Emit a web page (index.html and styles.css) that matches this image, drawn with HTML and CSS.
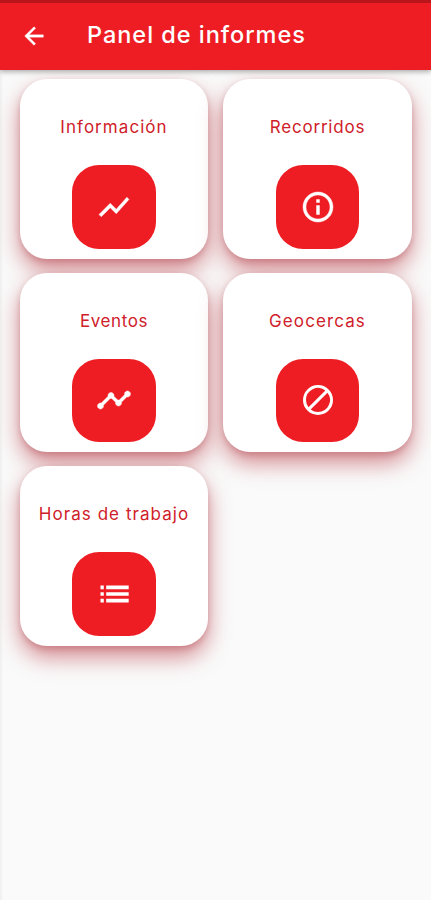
FILE: index.html
```html
<!DOCTYPE html>
<html lang="es">
<head>
    <meta charset="UTF-8">
    <meta name="viewport" content="width=device-width, initial-scale=1.0">
    <title>Panel de informes</title>
    <link rel="stylesheet" href="styles.css">
</head>
<body>
    <header class="appbar">
        <button class="back" aria-label="Volver">
            <svg viewBox="0 0 24 24"><path d="M20 11H7.83l5.59-5.59L12 4l-8 8 8 8 1.41-1.41L7.83 13H20v-2z"/></svg>
        </button>
        <h1>Panel de informes</h1>
    </header>
    <main class="grid">
        <a class="card">
            <span class="label informacion">Información</span>
            <span class="icon">
                <svg class="bold" viewBox="0 0 24 24"><path d="M3.5 18.49l6-6.01 4 4L22 6.92l-1.41-1.41-7.09 7.97-4-4L2 16.99z"/></svg>
            </span>
        </a>
        <a class="card">
            <span class="label recorridos">Recorridos</span>
            <span class="icon">
                <svg class="bold" viewBox="0 0 24 24"><path d="M11 7h2v2h-2zm0 4h2v6h-2zm1-9C6.48 2 2 6.48 2 12s4.48 10 10 10 10-4.48 10-10S17.52 2 12 2zm0 18c-4.41 0-8-3.59-8-8s3.59-8 8-8 8 3.59 8 8-3.59 8-8 8z"/></svg>
            </span>
        </a>
        <a class="card">
            <span class="label eventos">Eventos</span>
            <span class="icon">
                <svg class="bold" viewBox="0 0 24 24"><path d="M23 8c0 1.1-.9 2-2 2-.18 0-.35-.02-.51-.07l-3.56 3.55c.05.16.07.34.07.52 0 1.1-.9 2-2 2s-2-.9-2-2c0-.18.02-.36.07-.52l-2.55-2.55c-.16.05-.34.07-.52.07s-.36-.02-.52-.07l-4.55 4.56c.05.16.07.33.07.51 0 1.1-.9 2-2 2s-2-.9-2-2 .9-2 2-2c.18 0 .35.02.51.07l4.56-4.55C8.02 9.36 8 9.18 8 9c0-1.1.9-2 2-2s2 .9 2 2c0 .18-.02.36-.07.52l2.55 2.55c.16-.05.34-.07.52-.07s.36.02.52.07l3.55-3.56C19.02 8.35 19 8.18 19 8c0-1.1.9-2 2-2s2 .9 2 2z"/></svg>
            </span>
        </a>
        <a class="card">
            <span class="label geocercas">Geocercas</span>
            <span class="icon">
                <svg viewBox="0 0 24 24"><path fill-rule="evenodd" d="M12 2a10 10 0 1 0 0 20 10 10 0 0 0 0-20zM4 12a8 8 0 0 1 12.9-6.31L5.69 16.9A7.9 7.9 0 0 1 4 12zm8 8a7.9 7.9 0 0 1-4.9-1.69L18.31 7.1A8 8 0 0 1 12 20z"/></svg>
            </span>
        </a>
        <a class="card">
            <span class="label horas">Horas de trabajo</span>
            <span class="icon">
                <svg viewBox="0 0 24 24"><path d="M3 6.4h2.2v2.4H3zM3 10.8h2.2v2.4H3zM3 15.2h2.2v2.4H3zM6.8 6.4h15v2.4h-15zM6.8 10.8h15v2.4h-15zM6.8 15.2h15v2.4h-15z"/></svg>
            </span>
        </a>
    </main>
</body>
</html>
```
FILE: styles.css
```css
*{
    margin: 0;
    padding: 0;
    box-sizing: border-box;
}
body{
    height: 900px;
    background-color: #fafafa;
    font-family: Inter, "Open Sans", sans-serif;
    overflow: hidden;
}
.appbar{
    position: relative;
    z-index: 1;
    display: flex;
    align-items: center;
    height: 69.5px;
    padding-left: 20px;
    border-top: 3px solid #b9161b;
    background-color: #ee1d24;
    box-shadow: 0 2px 5px rgba(0, 0, 0, 0.3);
}
.back{
    width: 28px;
    height: 28px;
    margin-right: 39px;
    border: none;
    background: none;
}
.back svg{
    display: block;
    width: 28px;
    height: 28px;
    fill: #fff;
    stroke: #fff;
    stroke-width: 0.3;
}
h1{
    padding-bottom: 3px;
    color: #fff;
    font-size: 23.5px;
    font-weight: 500;
    line-height: 30px;
    white-space: nowrap;
    letter-spacing: 0.97px;
}
.grid{
    display: grid;
    grid-template-columns: 188.5px 188.5px;
    grid-auto-rows: 179.5px;
    align-content: start;
    gap: 14px 15px;
    height: 840px;
    padding: 9.5px 0 0 19.75px;
    box-shadow: inset 2px 0 2px rgba(0, 0, 0, 0.04);
}
.card{
    display: flex;
    flex-direction: column;
    align-items: center;
    padding-top: 35px;
    border-radius: 27px;
    background-color: #fff;
    box-shadow: 0 11px 22px rgba(175, 28, 40, 0.5), 0 3px 6px rgba(120, 20, 30, 0.2);
}
.label{
    height: 26px;
    margin-bottom: 25px;
    color: #cf2029;
    font-size: 17px;
    line-height: 26px;
    white-space: nowrap;
}
.informacion{ letter-spacing: 1.05px; }
.recorridos{ letter-spacing: 0.8px; }
.eventos{ letter-spacing: 0.6px; }
.geocercas{ letter-spacing: 1.1px; }
.horas{ letter-spacing: 1.05px; }
.icon{
    display: flex;
    align-items: center;
    justify-content: center;
    width: 83.5px;
    height: 83.5px;
    border-radius: 27px;
    background-color: #ee1d24;
}
.icon svg{
    width: 36px;
    height: 36px;
    fill: #fff;
}
.icon .bold{
    stroke: #fff;
    stroke-width: 0.3;
}
```
